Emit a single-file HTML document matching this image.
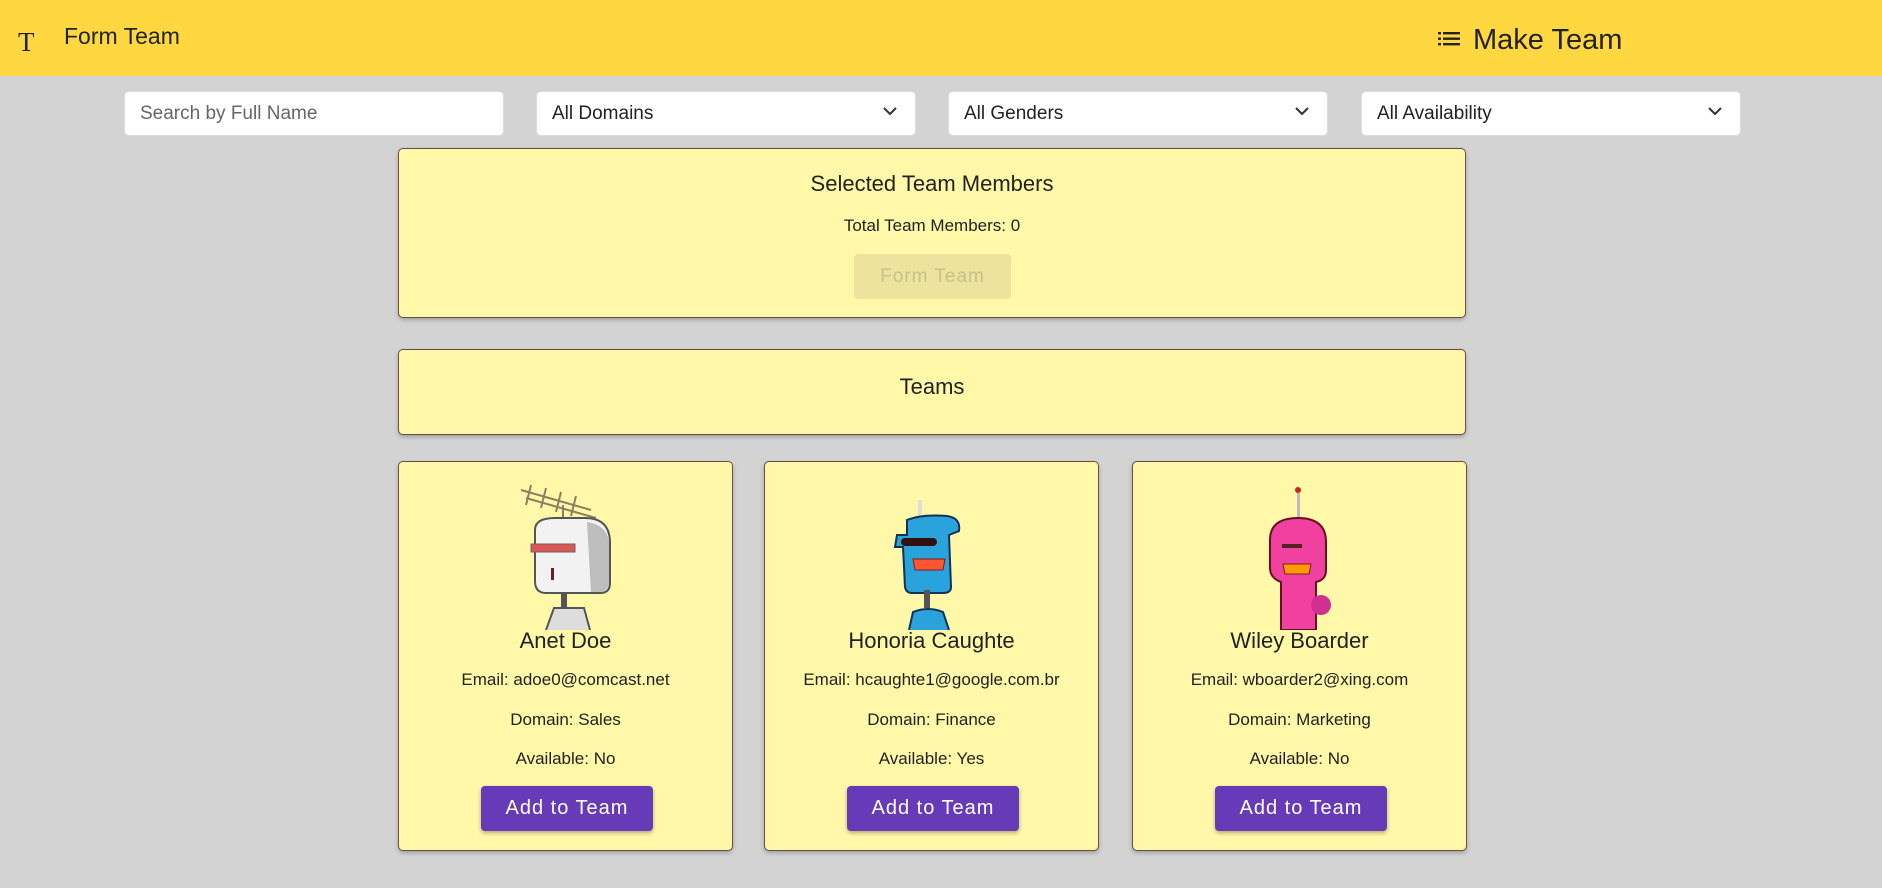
<!DOCTYPE html>
<html><head><meta charset="utf-8"><style>
*{box-sizing:border-box;margin:0;padding:0}
body{width:1882px;height:888px;background:#d3d3d3;font-family:"Liberation Sans",Roboto,sans-serif;color:#222;position:relative;overflow:hidden}
.hdr{position:absolute;left:0;top:0;width:1882px;height:76px;background:#ffd740}
.abs{position:absolute}
.inp{position:absolute;top:91px;height:45px;width:380px;background:#fff;border:1px solid #ddd;border-radius:5px;font-size:19px;line-height:43px;padding-left:15px;color:#222}
.inp svg{position:absolute;right:18px;top:15px}
.panel{position:absolute;left:398px;width:1068px;background:#fff8a8;border:1px solid #6d4c41;border-radius:5px;box-shadow:0 2px 4px rgba(0,0,0,.25);text-align:center}
.card{position:absolute;top:461px;width:335px;height:390px;background:#fff8a8;border:1px solid #6d4c41;border-radius:5px;box-shadow:0 2px 4px rgba(0,0,0,.25);text-align:center}
.card svg{position:absolute;left:92px;top:18px}
.nm{position:absolute;top:166px;width:100%;font-size:22px}
.ln{position:absolute;width:100%;font-size:17px}
.btn{position:absolute;left:82px;top:324px;width:172px;height:45px;background:#673ab7;color:#fff;border-radius:4px;font-size:20px;line-height:45px;letter-spacing:1px;box-shadow:0 2px 4px rgba(0,0,0,.3)}
</style></head><body>
<div class="hdr">
<div class="abs" style="left:18px;top:27px;font-family:'Liberation Serif',serif;font-size:27px">T</div>
<div class="abs" style="left:64px;top:23px;font-size:23px">Form Team</div>
<svg class="abs" style="left:1438px;top:31px" width="22" height="16" viewBox="0 0 22 16"><g fill="#222"><rect x="0" y="1" width="3" height="2.4"/><rect x="5" y="1" width="17" height="2.4"/><rect x="0" y="6.5" width="3" height="2.4"/><rect x="5" y="6.5" width="17" height="2.4"/><rect x="0" y="12" width="3" height="2.4"/><rect x="5" y="12" width="17" height="2.4"/></g></svg>
<div class="abs" style="left:1473px;top:24px;font-size:29px">Make Team</div>
</div>
<div class="inp" style="left:124px;color:#666">Search by Full Name</div>
<div class="inp" style="left:536px">All Domains<svg width="14" height="9" viewBox="0 0 14 9"><path d="M1 1l6 6 6-6" fill="none" stroke="#333" stroke-width="2"/></svg></div>
<div class="inp" style="left:948px">All Genders<svg width="14" height="9" viewBox="0 0 14 9"><path d="M1 1l6 6 6-6" fill="none" stroke="#333" stroke-width="2"/></svg></div>
<div class="inp" style="left:1361px">All Availability<svg width="14" height="9" viewBox="0 0 14 9"><path d="M1 1l6 6 6-6" fill="none" stroke="#333" stroke-width="2"/></svg></div>

<div class="panel" style="top:148px;height:170px">
<div class="abs" style="left:0;width:100%;top:22px;font-size:22px">Selected Team Members</div>
<div class="abs" style="left:0;width:100%;top:67px;font-size:17px">Total Team Members: 0</div>
<div class="abs" style="left:455px;top:105px;width:157px;height:45px;background:#ebe39e;border-radius:4px;color:#c9c08a;font-size:19px;line-height:45px;letter-spacing:1px">Form Team</div>
</div>
<div class="panel" style="top:349px;height:86px">
<div class="abs" style="left:0;width:100%;top:24px;font-size:22px">Teams</div>
</div>

<div class="card" style="left:398px">
<svg width="150" height="150" viewBox="0 0 150 150">
<g stroke="#8a7f60" stroke-width="2"><path d="M30 10l70 20M35 18l70 20M40 5l-5 20M55 8l-5 20M70 12l-5 20M85 16l-5 20M72 25v15"/></g>
<path d="M44 50q0-12 20-12h30q25 0 25 25v40q0 10-10 10H55q-11 0-11-12z" fill="#f2f2f2" stroke="#555" stroke-width="2"/>
<path d="M96 42q20 3 22 20v42q-2 8-10 8h-8z" fill="#bdbdbd"/>
<rect x="40" y="64" width="44" height="8" fill="#d55" stroke="#666"/>
<rect x="60" y="88" width="3" height="12" fill="#622"/>
<rect x="70" y="113" width="6" height="20" fill="#555"/>
<path d="M55 150l8-22h30l6 22" fill="#ddd" stroke="#555" stroke-width="2"/>
</svg>
<div class="nm">Anet Doe</div>
<div class="ln" style="top:208px">Email: adoe0@comcast.net</div>
<div class="ln" style="top:248px">Domain: Sales</div>
<div class="ln" style="top:287px">Available: No</div>
<div class="btn">Add to Team</div>
</div>

<div class="card" style="left:764px">
<svg width="150" height="150" viewBox="0 0 150 150">
<rect x="61" y="20" width="4" height="16" fill="#ddd"/>
<path d="M50 40q15-6 40-4q14 2 12 15l-10 4l2 52q0 6-8 6H55q-6 0-7-6l-2-40h-8l2-12h10z" fill="#2aa3dc" stroke="#135" stroke-width="2"/>
<rect x="44" y="58" width="36" height="8" rx="4" fill="#311"/>
<path d="M56 79h32l-2 11H58z" fill="#f53" stroke="#721"/>
<rect x="67" y="110" width="6" height="18" fill="#555"/>
<path d="M52 150l4-18q15-6 30 0l6 18" fill="#2aa3dc" stroke="#135" stroke-width="2"/>
</svg>
<div class="nm">Honoria Caughte</div>
<div class="ln" style="top:208px">Email: hcaughte1@google.com.br</div>
<div class="ln" style="top:248px">Domain: Finance</div>
<div class="ln" style="top:287px">Available: Yes</div>
<div class="btn">Add to Team</div>
</div>

<div class="card" style="left:1132px">
<svg width="150" height="150" viewBox="0 0 150 150">
<circle cx="73" cy="10" r="3" fill="#c22"/><rect x="72" y="13" width="3" height="26" fill="#bbb"/>
<path d="M45 60q0-22 28-22q28 0 28 24v28q0 10-10 12v48H56v-48q-11-4-11-14z" fill="#f040a0" stroke="#612" stroke-width="2"/>
<rect x="57" y="64" width="20" height="4" fill="#522"/>
<path d="M58 84h28l-2 10H60z" fill="#f90" stroke="#722"/>
<circle cx="96" cy="125" r="10" fill="#d03090"/>
</svg>
<div class="nm">Wiley Boarder</div>
<div class="ln" style="top:208px">Email: wboarder2@xing.com</div>
<div class="ln" style="top:248px">Domain: Marketing</div>
<div class="ln" style="top:287px">Available: No</div>
<div class="btn">Add to Team</div>
</div>
</body></html>
